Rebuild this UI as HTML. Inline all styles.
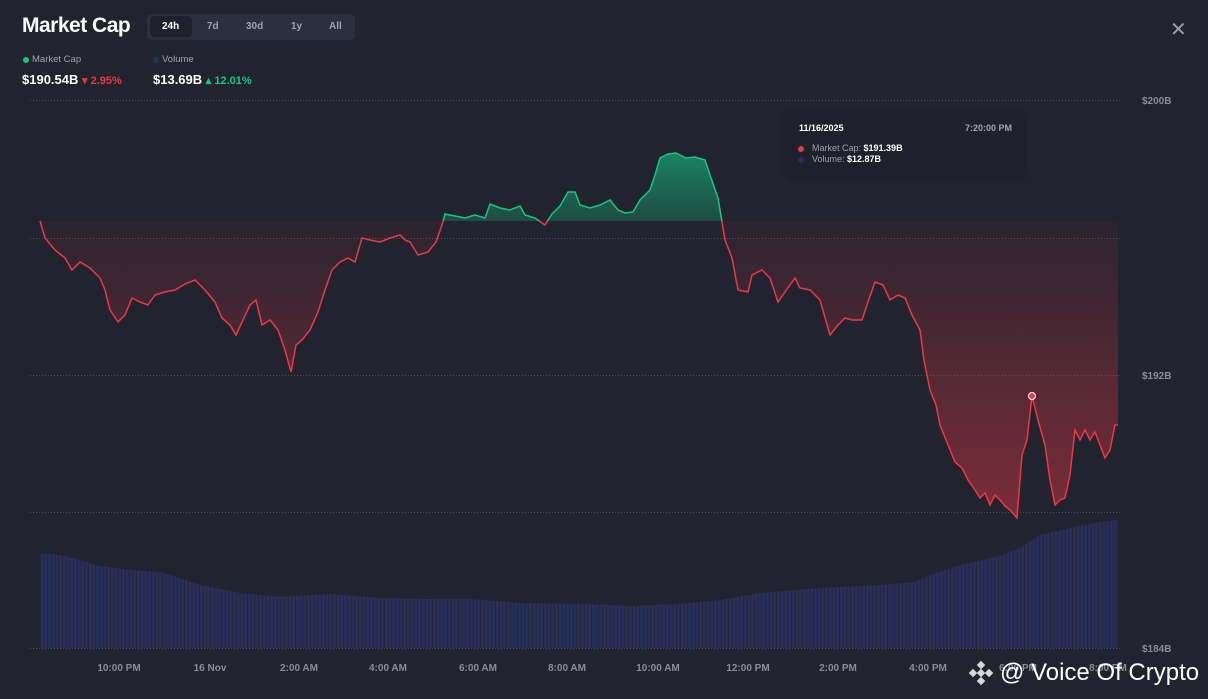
<!DOCTYPE html>
<html><head><meta charset="utf-8"><style>
html,body{margin:0;padding:0;background:#21232f;width:1208px;height:699px;overflow:hidden;font-family:"Liberation Sans",sans-serif;color:#fff}
.abs{position:absolute}
</style></head><body>
<div class="abs" style="left:22px;top:14px;font-size:21px;font-weight:bold;letter-spacing:-0.5px">Market Cap</div>
<div class="abs" style="left:147px;top:14px;width:208px;height:26px;background:#2c2f3d;border-radius:5px"></div>
<div class="abs" style="left:150px;top:16px;width:42px;height:21px;background:#1f212c;border-radius:4px"></div>
<div class="abs" style="top:21px;font-size:10px;font-weight:bold;color:#fff;left:162px">24h</div>
<div class="abs" style="top:21px;font-size:10px;font-weight:bold;color:#a0a3b0;left:207px">7d</div>
<div class="abs" style="top:21px;font-size:10px;font-weight:bold;color:#a0a3b0;left:246px">30d</div>
<div class="abs" style="top:21px;font-size:10px;font-weight:bold;color:#a0a3b0;left:291px">1y</div>
<div class="abs" style="top:21px;font-size:10px;font-weight:bold;color:#a0a3b0;left:329px">All</div>
<div class="abs" style="left:1170px;top:17px;font-size:20px;color:#9a9dab">✕</div>
<div class="abs" style="left:23px;top:57px;width:6px;height:6px;border-radius:50%;background:#16c784"></div>
<div class="abs" style="left:32px;top:54px;font-size:9.5px;color:#a0a3b0">Market Cap</div>
<div class="abs" style="left:22px;top:72px;font-size:13px;font-weight:bold">$190.54B <span style="color:#ea3943;font-size:11px;font-weight:bold">▾ 2.95%</span></div>
<div class="abs" style="left:153px;top:57px;width:6px;height:6px;border-radius:50%;background:#26305a"></div>
<div class="abs" style="left:162px;top:54px;font-size:9.5px;color:#a0a3b0">Volume</div>
<div class="abs" style="left:153px;top:72px;font-size:13px;font-weight:bold">$13.69B <span style="color:#16c784;font-size:11px;font-weight:bold">▴ 12.01%</span></div>

<svg class="abs" style="left:0;top:0" width="1208" height="699">
<defs>
<pattern id="bars" width="3.7" height="10" patternUnits="userSpaceOnUse"><rect width="2.9" height="10" fill="#27305a"/></pattern>
<linearGradient id="rg" x1="0" y1="221" x2="0" y2="520" gradientUnits="userSpaceOnUse"><stop offset="0" stop-color="#ea3943" stop-opacity="0.05"/><stop offset="1" stop-color="#ea3943" stop-opacity="0.45"/></linearGradient>
<linearGradient id="gg" x1="0" y1="150" x2="0" y2="221" gradientUnits="userSpaceOnUse"><stop offset="0" stop-color="#16c784" stop-opacity="0.6"/><stop offset="1" stop-color="#16c784" stop-opacity="0.25"/></linearGradient>
<clipPath id="above"><rect x="0" y="0" width="1208" height="221"/></clipPath>
<clipPath id="below"><rect x="0" y="221" width="1208" height="478"/></clipPath>
<polygon id="area" points="40,221 45,238 55,250 65,258 72,270 80,262 90,268 100,278 105,290 110,310 118,322 125,315 132,298 140,302 148,305 155,295 165,292 175,290 185,284 195,280 205,290 215,302 222,318 230,325 236,335 242,322 250,305 256,300 262,325 270,320 278,330 285,350 291,372 296,345 302,340 310,330 318,312 325,290 332,270 340,262 348,258 355,262 362,238 370,240 380,242 390,238 400,235 405,240 410,242 418,255 428,252 436,242 442,225 445,214 455,216 465,218 475,215 485,218 490,204 500,208 510,210 520,206 525,215 535,218 545,225 552,214 560,206 568,192 575,192 580,205 590,208 600,205 610,200 618,210 625,213 633,212 640,200 650,190 655,175 660,158 668,154 676,153 686,158 695,157 705,160 710,175 718,198 725,240 732,258 738,290 748,292 752,275 762,270 770,278 778,302 785,292 795,278 800,288 810,290 820,300 830,335 838,325 845,318 852,320 862,320 868,302 875,282 883,285 890,300 898,295 905,298 912,315 920,330 924,360 930,390 936,405 940,425 948,445 955,462 962,468 968,480 975,490 980,498 985,493 990,505 995,495 1000,500 1005,506 1010,510 1017,518 1022,455 1027,440 1032,396 1038,420 1045,445 1050,480 1055,505 1060,500 1065,498 1070,475 1075,430 1080,440 1085,430 1090,440 1095,432 1100,445 1105,458 1110,450 1115,425 1118,425 1118,221"/>
<polyline id="ln" fill="none" stroke-width="1.5" points="40,221 45,238 55,250 65,258 72,270 80,262 90,268 100,278 105,290 110,310 118,322 125,315 132,298 140,302 148,305 155,295 165,292 175,290 185,284 195,280 205,290 215,302 222,318 230,325 236,335 242,322 250,305 256,300 262,325 270,320 278,330 285,350 291,372 296,345 302,340 310,330 318,312 325,290 332,270 340,262 348,258 355,262 362,238 370,240 380,242 390,238 400,235 405,240 410,242 418,255 428,252 436,242 442,225 445,214 455,216 465,218 475,215 485,218 490,204 500,208 510,210 520,206 525,215 535,218 545,225 552,214 560,206 568,192 575,192 580,205 590,208 600,205 610,200 618,210 625,213 633,212 640,200 650,190 655,175 660,158 668,154 676,153 686,158 695,157 705,160 710,175 718,198 725,240 732,258 738,290 748,292 752,275 762,270 770,278 778,302 785,292 795,278 800,288 810,290 820,300 830,335 838,325 845,318 852,320 862,320 868,302 875,282 883,285 890,300 898,295 905,298 912,315 920,330 924,360 930,390 936,405 940,425 948,445 955,462 962,468 968,480 975,490 980,498 985,493 990,505 995,495 1000,500 1005,506 1010,510 1017,518 1022,455 1027,440 1032,396 1038,420 1045,445 1050,480 1055,505 1060,500 1065,498 1070,475 1075,430 1080,440 1085,430 1090,440 1095,432 1100,445 1105,458 1110,450 1115,425 1118,425"/>
</defs>
<g stroke="#4a4d5c" stroke-dasharray="1 2" stroke-width="1">
<line x1="30" y1="100.5" x2="1122" y2="100.5"/><line x1="30" y1="238.5" x2="1122" y2="238.5"/><line x1="30" y1="375.5" x2="1122" y2="375.5"/><line x1="30" y1="512.5" x2="1122" y2="512.5"/><line x1="30" y1="648.5" x2="1122" y2="648.5"/>
</g>
<polygon fill="url(#bars)" points="40,553 60,555 80,560 100,566 130,570 160,572 180,578 200,585 240,593 280,597 330,594 380,598 420,599 470,599 520,603 580,604 630,606 680,604 720,600 760,593 820,588 880,585 915,582 930,575 960,565 1000,556 1020,548 1040,535 1070,528 1100,522 1118,520 1118,648 40,648"/>
<g clip-path="url(#below)"><use href="#area" fill="url(#rg)"/><use href="#ln" stroke="#ea3943"/></g>
<g clip-path="url(#above)"><use href="#area" fill="url(#gg)"/><use href="#ln" stroke="#16c784"/></g>
<circle cx="1032" cy="396" r="3.5" fill="#ea3943" stroke="#fff" stroke-width="1"/>
<g font-size="10" fill="#8a8d9b" font-family="Liberation Sans,sans-serif" font-weight="bold">
<text x="1142" y="104">$200B</text><text x="1142" y="379">$192B</text><text x="1142" y="652">$184B</text>
<g text-anchor="middle">
<text x="119" y="671">10:00 PM</text><text x="210" y="671">16 Nov</text><text x="299" y="671">2:00 AM</text><text x="388" y="671">4:00 AM</text><text x="478" y="671">6:00 AM</text><text x="567" y="671">8:00 AM</text><text x="658" y="671">10:00 AM</text><text x="748" y="671">12:00 PM</text><text x="838" y="671">2:00 PM</text><text x="928" y="671">4:00 PM</text><text x="1018" y="671">6:00 PM</text><text x="1108" y="671">8:00 PM</text>
</g></g>
<g transform="translate(981,673)" fill="#d8d8d8"><rect x="-3" y="-3" width="6" height="6" transform="rotate(45)"/><rect x="-3" y="-11" width="6" height="6" transform="rotate(45 0 -8)"/><rect x="-3" y="5" width="6" height="6" transform="rotate(45 0 8)"/><rect x="-11" y="-3" width="6" height="6" transform="rotate(45 -8 0)"/><rect x="5" y="-3" width="6" height="6" transform="rotate(45 8 0)"/></g>
</svg>
<div class="abs" style="left:786px;top:112px;width:238px;height:66px;background:#1e202c;border-radius:6px;box-shadow:0 0 6px rgba(0,0,0,0.3)"></div>
<div class="abs" style="left:799px;top:123px;font-size:9px;font-weight:bold">11/16/2025</div>
<div class="abs" style="left:965px;top:123px;font-size:9px;color:#a0a3b0;font-weight:bold">7:20:00 PM</div>
<div class="abs" style="left:798px;top:146px;width:6px;height:6px;border-radius:50%;background:#ea3943"></div>
<div class="abs" style="left:798px;top:157px;width:6px;height:6px;border-radius:50%;background:#26305a"></div>
<div class="abs" style="left:812px;top:143px;font-size:9px;color:#a0a3b0">Market Cap: <b style="color:#fff">$191.39B</b></div>
<div class="abs" style="left:812px;top:154px;font-size:9px;color:#a0a3b0">Volume: <b style="color:#fff">$12.87B</b></div>
<div class="abs" style="left:1000px;top:659px;font-size:24px;color:#fff;white-space:nowrap">@ Voice Of Crypto</div>
</body></html>
